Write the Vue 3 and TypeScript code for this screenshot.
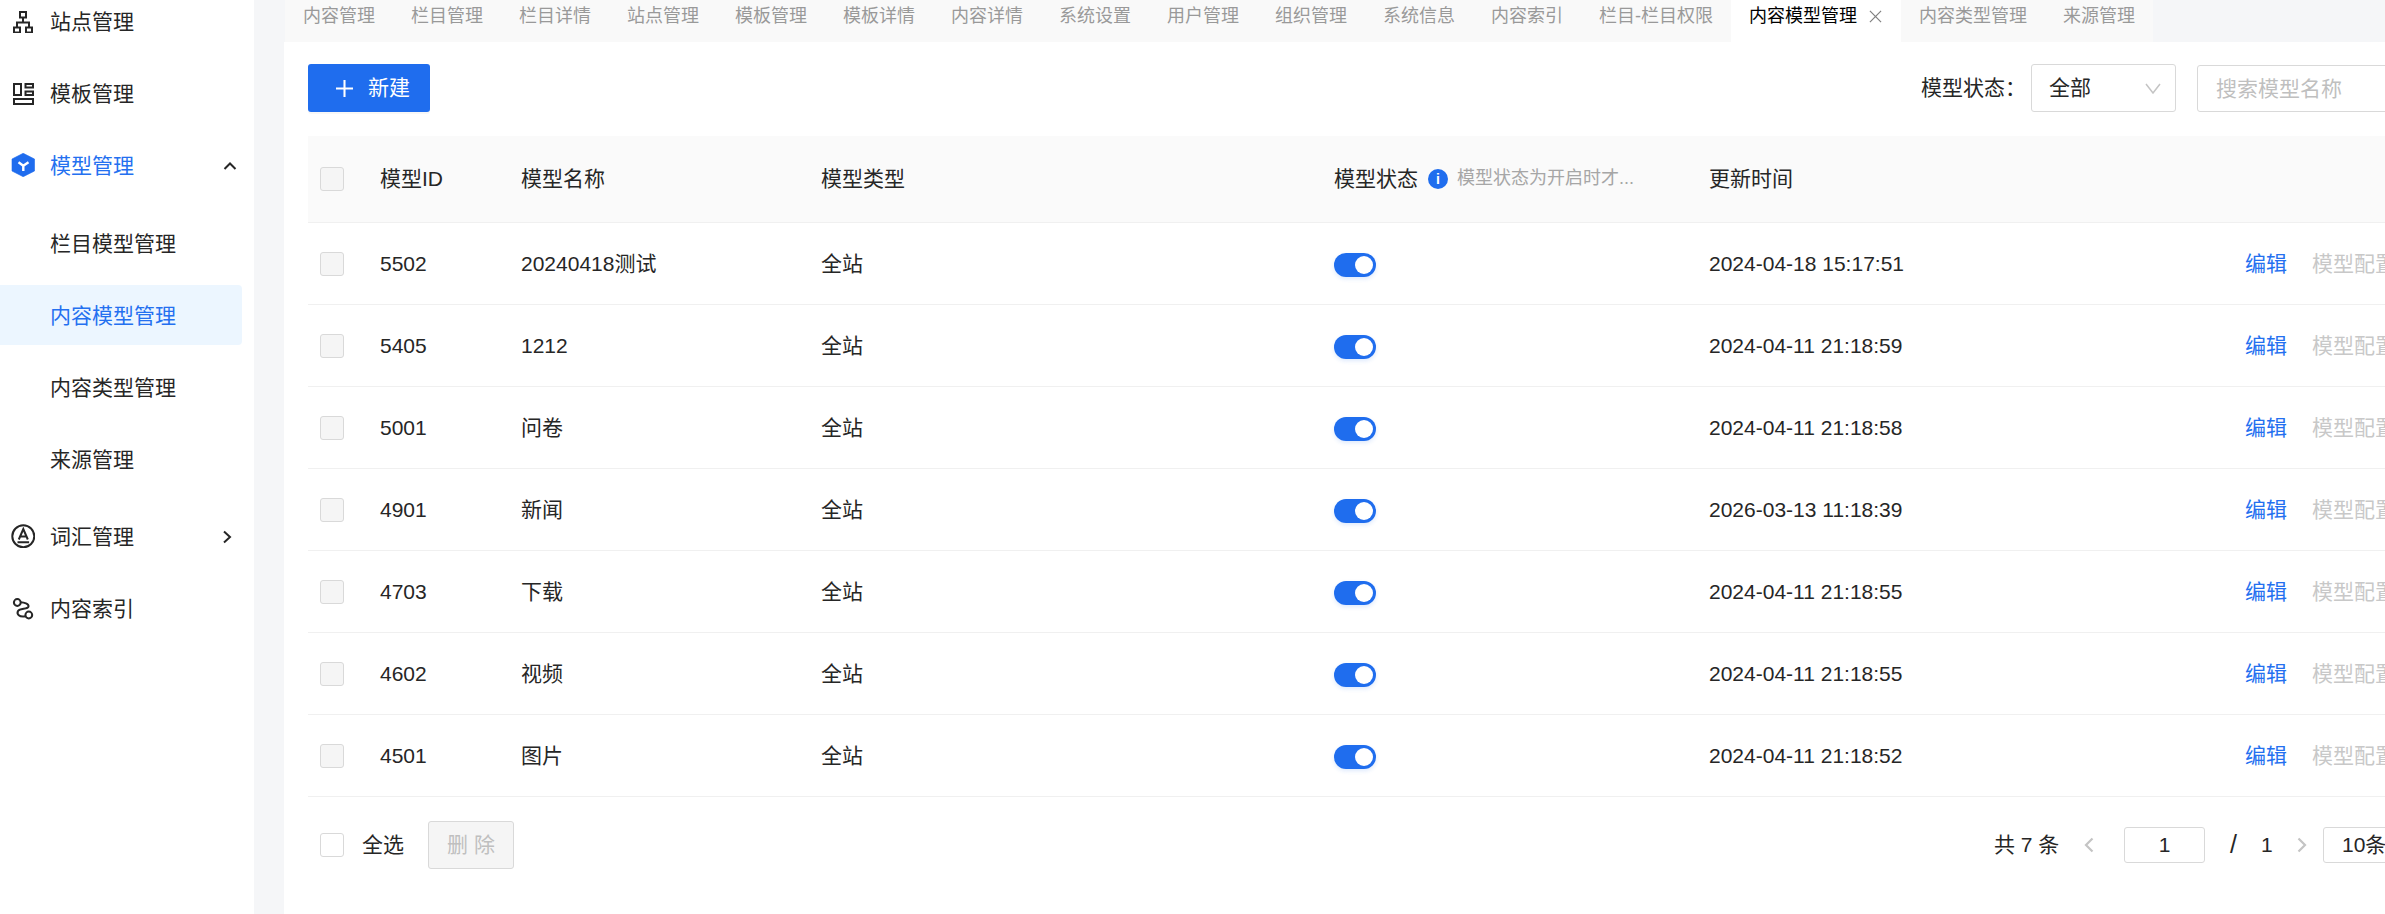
<script setup lang="ts">
interface Row { id: number; name: string; time: string }

const tabs: string[] = ['内容管理', '栏目管理', '栏目详情', '站点管理', '模板管理', '模板详情', '内容详情', '系统设置', '用户管理', '组织管理', '系统信息', '内容索引', '栏目-栏目权限']
const rows: Row[] = [
  { id: 5502, name: '20240418测试', time: '2024-04-18 15:17:51' },
  { id: 5405, name: '1212', time: '2024-04-11 21:18:59' },
  { id: 5001, name: '问卷', time: '2024-04-11 21:18:58' },
  { id: 4901, name: '新闻', time: '2026-03-13 11:18:39' },
  { id: 4703, name: '下载', time: '2024-04-11 21:18:55' },
  { id: 4602, name: '视频', time: '2024-04-11 21:18:55' },
  { id: 4501, name: '图片', time: '2024-04-11 21:18:52' },
]
</script>

<template>
  <div class="app">
    <aside class="side">
      <nav class="nav">
        <div class="item">
          <svg class="ic" viewBox="0 0 24 24" fill="none" stroke="#262626" stroke-width="2"><rect x="9" y="3" width="6" height="5.500"/><rect x="3" y="18.500" width="6" height="5"/><rect x="15" y="18.500" width="6" height="5"/><path d="M12 8.500V13.500M6 18.500v-5h12v5"/></svg>
          <span>站点管理</span>
        </div>
        <div class="item">
          <svg class="ic" viewBox="0 0 24 24" fill="none" stroke="#262626" stroke-width="2"><rect x="3" y="3" width="7" height="11"/><rect x="14.500" y="3" width="7.500" height="3.500"/><rect x="14.500" y="10.500" width="7.500" height="3.500"/><rect x="3" y="18" width="19" height="5"/></svg>
          <span>模板管理</span>
        </div>
        <div class="item active-parent">
          <svg class="ic" viewBox="0 0 24 24"><path d="M12.200.3 23.500 6v12l-11.300 5.700L1 18V6z" fill="#1f6cee" stroke="#1f6cee" stroke-width=".6" stroke-linejoin="round"/><path d="M7.500 9.300 12.300 12.700l5.200-3.400M12.300 12.700V18" fill="none" stroke="#fff" stroke-width="2.400"/></svg>
          <span>模型管理</span>
          <svg class="chev up" viewBox="0 0 14 10" fill="none" stroke="#262626" stroke-width="2"><path d="M1.500 8 7 2.500 12.500 8"/></svg>
        </div>
        <div class="sub">
          <div class="item">栏目模型管理</div>
          <div class="item selected">内容模型管理</div>
          <div class="item">内容类型管理</div>
          <div class="item">来源管理</div>
        </div>
        <div class="item">
          <svg class="ic" viewBox="0 0 24 24" fill="none" stroke="#262626" stroke-width="2"><circle cx="12.300" cy="12.300" r="11"/><path d="M7.800 15.500 12.300 5l4.500 10.500M9.500 12.500h5.600M6.500 18.300h11.600"/></svg>
          <span>词汇管理</span>
          <svg class="chev right" viewBox="0 0 10 14" fill="none" stroke="#262626" stroke-width="2"><path d="M2 1.500 8 7l-6 5.500"/></svg>
        </div>
        <div class="item">
          <svg class="ic" viewBox="0 0 24 24" fill="none" stroke="#262626" stroke-width="2"><circle cx="6.300" cy="6.500" r="3.400"/><circle cx="17.800" cy="19" r="3.400"/><path d="M9.500 6.300C13 6.500 18 7.500 17.500 10.500 17 13.500 9 12 7 15c-1.500 3 1 6.500 7.500 5.300"/></svg>
          <span>内容索引</span>
        </div>
      </nav>
    </aside>

    <main class="main">
      <div class="tabs">
        <div v-for="t in tabs" :key="t" class="tab">{{ t }}</div>
        <div class="tab on">内容模型管理
          <svg class="x" viewBox="0 0 14 14" fill="none" stroke="#808080" stroke-width="1.300"><path d="M1 1l12 12M13 1 1 13"/></svg>
        </div>
        <div class="tab">内容类型管理</div>
        <div class="tab">来源管理</div>
      </div>

      <section class="content">
        <div class="toolbar">
          <button class="primary"><svg viewBox="0 0 18 18" stroke="#fff" stroke-width="2.200"><path d="M9 0v18M0 9h18"/></svg>新建</button>
          <div class="filters">
            <label>模型状态：</label>
            <div class="select"><span>全部</span><svg viewBox="0 0 16 11" fill="none" stroke="#c4c4c4" stroke-width="1.500"><path d="M1 1l7 9 7-9"/></svg></div>
            <div class="search">搜索模型名称</div>
          </div>
        </div>

        <div class="row head">
          <span class="cb"></span>
          <span>模型ID</span>
          <span>模型名称</span>
          <span>模型类型</span>
          <span class="status">模型状态<i class="info">i</i><em>模型状态为开启时才...</em></span>
          <span>更新时间</span>
          <span></span>
        </div>
        <div v-for="r in rows" :key="r.id" class="row">
          <span class="cb"></span>
          <span>{{ r.id }}</span>
          <span>{{ r.name }}</span>
          <span>全站</span>
          <span><span class="switch"></span></span>
          <span>{{ r.time }}</span>
          <span class="acts"><a>编辑</a><a class="off">模型配置</a></span>
        </div>

        <div class="foot">
          <span class="cb blank"></span>
          <span class="all">全选</span>
          <button class="del">删 除</button>
          <div class="pager">
            <span class="total">共 7 条</span>
            <svg class="arrow prev" viewBox="0 0 10 16" fill="none" stroke="#c4c4c4" stroke-width="2.200"><path d="M8.500 1.500 2 8l6.500 6.500"/></svg>
            <span class="page-in">1</span>
            <span class="slash">/</span>
            <span class="pages">1</span>
            <svg class="arrow next" viewBox="0 0 10 16" fill="none" stroke="#c4c4c4" stroke-width="2.200"><path d="M1.500 1.500 8 8l-6.500 6.500"/></svg>
            <span class="size">10条/页</span>
          </div>
        </div>
      </section>
    </main>
  </div>
</template>

<style>
html, body { margin: 0; overflow: hidden; background: #f5f6f8; }
</style>

<style scoped>
.app {
  display: flex; width: 2385px; height: 914px; overflow: hidden; background: #f5f6f8;
  font-family: "Liberation Sans", "Noto Sans CJK SC", sans-serif; font-size: 21px; line-height: 1.5; color: #262626;
}
.side { width: 254px; flex: none; background: #fff; overflow: hidden; }
.nav { margin-top: -9px; }
.item { position: relative; display: flex; align-items: center; height: 60px; margin-bottom: 12px; padding: 2px 0 0 50px; width: 242px; box-sizing: border-box; }
.ic { position: absolute; left: 11px; top: 18px; width: 24px; height: 24px; }
.active-parent { color: #2470f0; }
.sub { margin: 18px 0 17px; }
.selected { background: #ecf6ff; color: #2470f0; border-radius: 0 4px 4px 0; }
.chev { position: absolute; }
.up { left: 223px; top: 26px; width: 14px; height: 10px; }
.right { left: 222px; top: 24px; width: 10px; height: 14px; }

.main { width: 2101px; margin-left: 30px; flex: none; overflow: hidden; }
.tabs { display: flex; height: 42px; padding-left: 1px; font-size: 18px; color: #999; }
.tab { display: flex; align-items: center; height: 42px; box-sizing: border-box; padding: 0 18px 10px; background: #f9f9f9; white-space: nowrap; }
.tab.on { background: #fff; color: #000; }
.x { width: 13px; height: 13px; margin-left: 12px; margin-right: 1px; }

.content { width: 2237px; height: 872px; box-sizing: border-box; padding: 22px 24px 0; background: #fff; }
.toolbar { display: flex; justify-content: space-between; align-items: flex-start; height: 72px; }
.primary { display: flex; align-items: center; width: 122px; height: 48px; padding: 0 0 0 28px; box-sizing: border-box; border: 0; border-radius: 3px; background: #1f6dee; color: #fff; font: inherit; box-shadow: 0 2px 0 rgba(0, 0, 0, .03); }
.primary svg { width: 17px; height: 17px; margin-right: 15px; }
.filters { display: flex; align-items: center; height: 48px; }
.filters label { width: 110px; }
.select { display: flex; align-items: center; justify-content: space-between; width: 145px; height: 48px; box-sizing: border-box; margin-right: 21px; padding: 0 14px 0 17px; border: 1px solid #d9d9d9; border-radius: 3px; }
.select svg { width: 16px; height: 11px; }
.search { width: 300px; height: 47px; line-height: 45px; box-sizing: border-box; padding-left: 18px; border: 1px solid #d9d9d9; border-radius: 3px; color: #bfbfbf; }

.row { display: grid; grid-template-columns: 60px 141px 300px 513px 375px 536px 1fr; align-items: center; height: 82px; padding: 1.500px 0 0 12px; box-sizing: border-box; border-bottom: 1.500px solid #f0f0f0; }
.head { height: 86.500px; padding-top: 0; background: #fafafa; }
.cb { display: block; width: 24px; height: 24px; box-sizing: border-box; border: 1px solid #d9d9d9; border-radius: 3px; background: #f5f5f5; }
.cb.blank { background: #fff; flex: none; }
.status { display: flex; align-items: center; }
.info { display: flex; align-items: center; justify-content: center; width: 20px; height: 20px; margin: 0 9px 0 10px; border-radius: 50%; background: #1f6dee; color: #fff; font: bold 14px "Liberation Sans", sans-serif; }
.status em { font-style: normal; font-size: 18px; color: #a6a6a6; }
.switch { display: block; position: relative; top: 1px; width: 42px; height: 24px; border-radius: 12px; background: #1f6dee; box-shadow: 0 2px 4px rgba(31, 109, 238, .15); }
.switch::after { content: ""; position: absolute; right: 3px; top: 3px; width: 18px; height: 18px; border-radius: 50%; background: #fff; }
.acts { display: flex; gap: 25px; white-space: nowrap; }
.acts a { color: #2470f0; }
.acts .off { color: #c8c8c8; }

.foot { display: flex; align-items: center; height: 48px; margin-top: 24px; padding-left: 12px; }
.all { margin: 0 24px 0 18px; }
.del { width: 86px; height: 48px; padding: 0; box-sizing: border-box; border: 1px solid #d9d9d9; border-radius: 3px; background: #f5f5f5; color: #bfbfbf; font: inherit; }
.pager { display: flex; align-items: center; margin-left: auto; height: 36px; }
.total { width: 90px; }
.arrow { width: 10px; height: 16px; }
.prev { margin-right: 30px; }
.page-in { width: 81px; height: 36px; line-height: 34px; text-align: center; box-sizing: border-box; border: 1px solid #d9d9d9; border-radius: 3px; }
.slash { margin-left: 25px; width: 12px; font-size: 25px; }
.pages { margin-left: 19px; width: 12px; }
.next { margin-left: 24px; margin-right: 16px; }
.size { width: 174px; height: 36px; line-height: 34px; box-sizing: border-box; padding-left: 18px; border: 1px solid #d9d9d9; border-radius: 3px; white-space: nowrap; }
</style>
